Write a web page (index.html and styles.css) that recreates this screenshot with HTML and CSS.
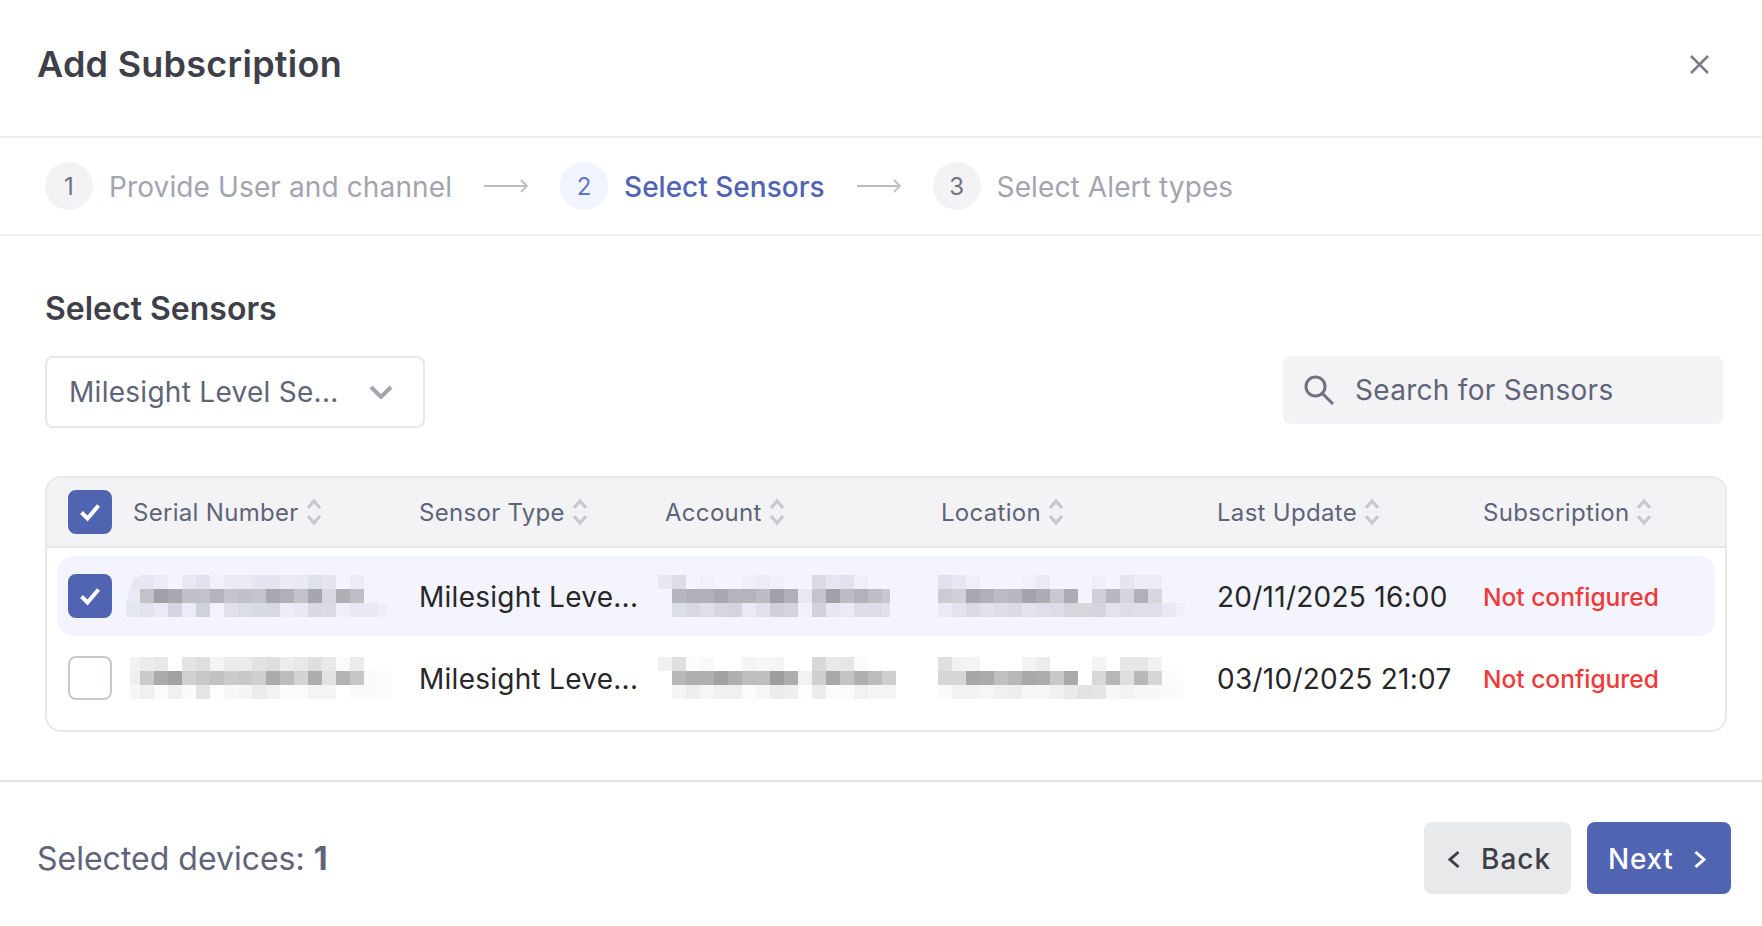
FILE: index.html
```html
<!DOCTYPE html>
<html lang="en">
<head>
<meta charset="utf-8">
<title>Add Subscription</title>
<link rel="stylesheet" href="styles.css">
</head>
<body>
<svg class="defs" width="0" height="0" aria-hidden="true">
  <symbol id="sort" viewBox="0 0 16 28"><path d="M2 10l6-7 6 7M2 18l6 7 6-7"/></symbol>
  <symbol id="check" viewBox="0 0 24 24"><path d="M3.500 12.500l6 6L20.500 5.500"/></symbol>
  <symbol id="arrow" viewBox="0 0 44 14"><path d="M0 7h43M37 1l6 6-6 6"/></symbol>
</svg>
<main class="modal">
  <header class="modal-head">
    <h1 class="modal-title">Add Subscription</h1>
    <svg class="close-icon" viewBox="0 0 19 19"><path d="M1 1l17 17M18 1L1 18"/></svg>
  </header>
  <nav class="stepper">
    <div class="step"><span class="step-num">1</span><span class="step-label">Provide User and channel</span></div>
    <svg class="step-arrow"><use href="#arrow"/></svg>
    <div class="step step-active"><span class="step-num">2</span><span class="step-label">Select Sensors</span></div>
    <svg class="step-arrow"><use href="#arrow"/></svg>
    <div class="step"><span class="step-num">3</span><span class="step-label">Select Alert types</span></div>
  </nav>
  <section class="content">
    <h2 class="section-title">Select Sensors</h2>
    <div class="toolbar">
      <div class="select"><span>Milesight Level Se...</span>
        <svg class="select-chevron" viewBox="0 0 24 14"><path d="M2 2l10 10L22 2"/></svg>
      </div>
      <div class="search">
        <svg class="search-icon" viewBox="0 0 30 30"><circle cx="11.500" cy="11.500" r="9.500"/><path d="M18.500 18.500L29 29"/></svg>
        <span>Search for Sensors</span>
      </div>
    </div>
    <div class="table">
      <div class="grid table-head">
        <span class="checkbox checked"><svg><use href="#check"/></svg></span>
        <span class="th">Serial Number<svg class="sort"><use href="#sort"/></svg></span>
        <span class="th">Sensor Type<svg class="sort"><use href="#sort"/></svg></span>
        <span class="th">Account<svg class="sort"><use href="#sort"/></svg></span>
        <span class="th">Location<svg class="sort"><use href="#sort"/></svg></span>
        <span class="th">Last Update<svg class="sort"><use href="#sort"/></svg></span>
        <span class="th">Subscription<svg class="sort"><use href="#sort"/></svg></span>
      </div>
      <div class="table-body">
        <div class="grid row row-selected">
          <span class="checkbox checked"><svg><use href="#check"/></svg></span>
          <svg class="px px-serial" width="266" height="42">
            <polygon points="8,2 14,2 14,14 4,14" fill="#e6e7f2"/>
            <rect x="14" y="0" fill="#e6e7f2"/><rect x="28" y="0" fill="#ebecf6"/><rect x="56" y="0" fill="#e7e8f3"/><rect x="70" y="0" fill="#e1e2ed"/><rect x="84" y="0" fill="#f0f1fa"/><rect x="98" y="0" fill="#eaebf5"/><rect x="112" y="0" fill="#eaebf5"/><rect x="126" y="0" fill="#e4e5f0"/><rect x="140" y="0" fill="#e4e5f0"/><rect x="154" y="0" fill="#eaebf5"/><rect x="168" y="0" fill="#e8e9f3"/><rect x="182" y="0" fill="#e0e2e9"/><rect x="196" y="0" fill="#e4e5ef"/><rect x="224" y="0" fill="#ebecf6"/>
            <polygon points="4,14 14,14 14,28 0,28" fill="#e8e9f4"/><rect x="14" y="14" fill="#c2c2c9"/><rect x="28" y="14" fill="#a0a0a8"/><rect x="42" y="14" fill="#a8a8b0"/><rect x="56" y="14" fill="#c0c0c8"/><rect x="70" y="14" fill="#c2c2ca"/><rect x="84" y="14" fill="#b4b4bc"/><rect x="98" y="14" fill="#c4c4cc"/><rect x="112" y="14" fill="#c0c0c8"/><rect x="126" y="14" fill="#c4c4cc"/><rect x="140" y="14" fill="#a8a8b0"/><rect x="154" y="14" fill="#b0b0b8"/><rect x="168" y="14" fill="#c2c2ca"/><rect x="182" y="14" fill="#a6a6ae"/><rect x="196" y="14" fill="#d8d9df"/><rect x="210" y="14" fill="#aeaeb5"/><rect x="224" y="14" fill="#bebec6"/>
            <rect x="0" y="28" fill="#e4e6f0"/><rect x="14" y="28" fill="#e2e3ee"/><rect x="28" y="28" fill="#e9eaf5"/><rect x="42" y="28" fill="#d4d5e2"/><rect x="56" y="28" fill="#ebecf7"/><rect x="70" y="28" fill="#d0d2da"/><rect x="84" y="28" fill="#f2f3fc"/><rect x="98" y="28" fill="#e0e1ec"/><rect x="112" y="28" fill="#dcdee6"/><rect x="126" y="28" fill="#d8dae2"/><rect x="140" y="28" fill="#d6d8e4"/><rect x="154" y="28" fill="#ecedf7"/><rect x="168" y="28" fill="#e8e9f4"/><rect x="182" y="28" fill="#d8dae0"/><rect x="196" y="28" fill="#dadbe6"/><rect x="210" y="28" fill="#eeeff9"/><rect x="224" y="28" fill="#e8e9f4"/><rect x="238" y="28" fill="#e8e9f4"/><polygon points="252,28 263,28 259,42 252,42" fill="#eeeff8"/>
          </svg>
          <span class="td">Milesight Leve...</span>
          <svg class="px px-account px-trim" width="238" height="42">
            <rect x="0" y="0" fill="#e6e7f3"/><rect x="14" y="0" fill="#dcdde6"/><rect x="42" y="0" fill="#f0f1fa"/><rect x="84" y="0" fill="#eeeff8"/><rect x="98" y="0" fill="#ebecf5"/><rect x="112" y="0" fill="#eff0f9"/><rect x="154" y="0" fill="#d9dae2"/><rect x="168" y="0" fill="#e5e6f1"/><rect x="182" y="0" fill="#e1e2ed"/><rect x="196" y="0" fill="#eeeff9"/>
            <rect x="14" y="14" fill="#b6b6be"/><rect x="28" y="14" fill="#b0b0b8"/><rect x="42" y="14" fill="#b0b0b8"/><rect x="56" y="14" fill="#a8a8b0"/><rect x="70" y="14" fill="#b4b4bc"/><rect x="84" y="14" fill="#b4b4bc"/><rect x="98" y="14" fill="#bcbcc4"/><rect x="112" y="14" fill="#a0a0a8"/><rect x="126" y="14" fill="#b0b0b8"/><rect x="140" y="14" fill="#e7e8f3"/><rect x="154" y="14" fill="#c4c4cc"/><rect x="168" y="14" fill="#a0a0a8"/><rect x="182" y="14" fill="#bcbcc4"/><rect x="196" y="14" fill="#b2b2ba"/><rect x="210" y="14" fill="#bebec6"/><rect x="224" y="14" fill="#c8c8d0"/>
            <rect x="14" y="28" fill="#dddfe6"/><rect x="28" y="28" fill="#d8d9e0"/><rect x="42" y="28" fill="#dfe0e8"/><rect x="56" y="28" fill="#d5d6de"/><rect x="70" y="28" fill="#d3d4e0"/><rect x="84" y="28" fill="#e9eaf5"/><rect x="98" y="28" fill="#e0e1ec"/><rect x="112" y="28" fill="#cfd0d8"/><rect x="126" y="28" fill="#d4d5dc"/><rect x="140" y="28" fill="#f0f1fa"/><rect x="154" y="28" fill="#d2d3da"/><rect x="168" y="28" fill="#e6e7f3"/><rect x="182" y="28" fill="#e9eaf5"/><rect x="196" y="28" fill="#dcdde6"/><rect x="210" y="28" fill="#dcdde8"/><rect x="224" y="28" fill="#e0e1ec"/>
          </svg>
          <svg class="px px-location" width="252" height="42">
            <rect x="0" y="0" fill="#e0e1ec"/><rect x="14" y="0" fill="#e6e7f2"/><rect x="28" y="0" fill="#eeeff9"/><rect x="84" y="0" fill="#f0f1fa"/><rect x="98" y="0" fill="#e9eaf4"/><rect x="154" y="0" fill="#eeeff8"/><rect x="182" y="0" fill="#e4e5f0"/><rect x="196" y="0" fill="#ebecf6"/><rect x="210" y="0" fill="#ebecf6"/>
            <rect x="0" y="14" fill="#ccccd4"/><rect x="14" y="14" fill="#d0d1d8"/><rect x="28" y="14" fill="#a8a8b0"/><rect x="42" y="14" fill="#b0b0b8"/><rect x="56" y="14" fill="#bcbcc4"/><rect x="70" y="14" fill="#b8b8c0"/><rect x="84" y="14" fill="#a4a4ac"/><rect x="98" y="14" fill="#acacb4"/><rect x="112" y="14" fill="#c8c9d0"/><rect x="126" y="14" fill="#acacb4"/><rect x="154" y="14" fill="#d0d1d8"/><rect x="168" y="14" fill="#b8b8c0"/><rect x="182" y="14" fill="#d4d5df"/><rect x="196" y="14" fill="#b0b0b8"/><rect x="210" y="14" fill="#d6d7dc"/>
            <rect x="0" y="28" fill="#e9eaf5"/><rect x="14" y="28" fill="#e2e3ee"/><rect x="28" y="28" fill="#dadbe2"/><rect x="42" y="28" fill="#e0e1ea"/><rect x="56" y="28" fill="#dcdde8"/><rect x="70" y="28" fill="#dadbe3"/><rect x="84" y="28" fill="#e2e3ee"/><rect x="98" y="28" fill="#dedfea"/><rect x="112" y="28" fill="#dcdde8"/><rect x="126" y="28" fill="#d6d7dd"/><rect x="140" y="28" fill="#d6d7dd"/><rect x="154" y="28" fill="#d4d5dc"/><rect x="168" y="28" fill="#e2e3ee"/><rect x="182" y="28" fill="#dcdde8"/><rect x="196" y="28" fill="#dedfe9"/><rect x="210" y="28" fill="#dedfe9"/><rect x="224" y="28" fill="#e8e9f4"/><polygon points="238,28 248,28 245,42 238,42" fill="#eeeff8"/>
          </svg>
          <span class="td">20/11/2025 16:00</span>
          <span class="status">Not configured</span>
        </div>
        <div class="grid row">
          <span class="checkbox"></span>
          <svg class="px px-serial px-inset" width="266" height="42">
            <rect x="0" y="0" fill="#f2f2f2"/><rect x="14" y="0" fill="#ececec"/><rect x="28" y="0" fill="#e8e8e8"/><rect x="56" y="0" fill="#e4e4e4"/><rect x="70" y="0" fill="#dedede"/><rect x="84" y="0" fill="#f4f4f4"/><rect x="98" y="0" fill="#ebebeb"/><rect x="112" y="0" fill="#ebebeb"/><rect x="126" y="0" fill="#e2e2e2"/><rect x="140" y="0" fill="#dedede"/><rect x="154" y="0" fill="#ececec"/><rect x="168" y="0" fill="#e8e8e8"/><rect x="182" y="0" fill="#dedede"/><rect x="196" y="0" fill="#e8e8e8"/><rect x="210" y="0" fill="#fafafa"/><rect x="224" y="0" fill="#ebebeb"/>
            <rect x="0" y="14" fill="#efefef"/><rect x="14" y="14" fill="#cbcbcb"/><rect x="28" y="14" fill="#ababab"/><rect x="42" y="14" fill="#a2a2a2"/><rect x="56" y="14" fill="#d0d0d0"/><rect x="70" y="14" fill="#c8c8c8"/><rect x="84" y="14" fill="#c2c2c2"/><rect x="98" y="14" fill="#cbcbcb"/><rect x="112" y="14" fill="#c8c8c8"/><rect x="126" y="14" fill="#cfcfcf"/><rect x="140" y="14" fill="#ababab"/><rect x="154" y="14" fill="#bcbcbc"/><rect x="168" y="14" fill="#d4d4d4"/><rect x="182" y="14" fill="#adadad"/><rect x="196" y="14" fill="#e2e2e2"/><rect x="210" y="14" fill="#b3b3b3"/><rect x="224" y="14" fill="#c6c6c6"/><rect x="238" y="14" fill="#fafafa"/><rect x="252" y="14" fill="#fbfbfb"/>
            <rect x="0" y="28" fill="#f6f6f6"/><rect x="14" y="28" fill="#f0f0f0"/><rect x="28" y="28" fill="#fbfbfb"/><rect x="42" y="28" fill="#f0f0f0"/><rect x="56" y="28" fill="#fafafa"/><rect x="70" y="28" fill="#e4e4e4"/><rect x="84" y="28" fill="#fefefe"/><rect x="98" y="28" fill="#f7f7f7"/><rect x="112" y="28" fill="#f5f5f5"/><rect x="126" y="28" fill="#ebebeb"/><rect x="140" y="28" fill="#f2f2f2"/><rect x="154" y="28" fill="#fcfcfc"/><rect x="168" y="28" fill="#fbfbfb"/><rect x="182" y="28" fill="#f4f4f4"/><rect x="196" y="28" fill="#f4f4f4"/><rect x="224" y="28" fill="#fafafa"/><rect x="238" y="28" fill="#fafafa"/><rect x="252" y="28" fill="#fbfbfb"/>
          </svg>
          <span class="td">Milesight Leve...</span>
          <svg class="px px-account" width="238" height="42">
            <rect x="0" y="0" fill="#f0f0f0"/><rect x="14" y="0" fill="#dfdfdf"/><rect x="28" y="0" fill="#fcfcfc"/><rect x="42" y="0" fill="#f8f8f8"/><rect x="84" y="0" fill="#f4f4f4"/><rect x="98" y="0" fill="#f7f7f7"/><rect x="112" y="0" fill="#f4f4f4"/><rect x="154" y="0" fill="#d8d8d8"/><rect x="168" y="0" fill="#e8e8e8"/><rect x="182" y="0" fill="#e6e6e6"/><rect x="196" y="0" fill="#fafafa"/>
            <rect x="14" y="14" fill="#b8b8b8"/><rect x="28" y="14" fill="#b0b0b0"/><rect x="42" y="14" fill="#b0b0b0"/><rect x="56" y="14" fill="#a2a2a2"/><rect x="70" y="14" fill="#b0b0b0"/><rect x="84" y="14" fill="#bebebe"/><rect x="98" y="14" fill="#bebebe"/><rect x="112" y="14" fill="#9e9c9c"/><rect x="126" y="14" fill="#aeaeae"/><rect x="140" y="14" fill="#f2f2f2"/><rect x="154" y="14" fill="#cfcfcf"/><rect x="168" y="14" fill="#a8a8a8"/><rect x="182" y="14" fill="#c4c4c4"/><rect x="196" y="14" fill="#b0b0b0"/><rect x="210" y="14" fill="#bcbcbc"/><rect x="224" y="14" fill="#cecece"/>
            <rect x="14" y="28" fill="#f5f5f5"/><rect x="28" y="28" fill="#eeeeee"/><rect x="42" y="28" fill="#f6f6f6"/><rect x="56" y="28" fill="#f0f0f0"/><rect x="70" y="28" fill="#f0f0f0"/><rect x="84" y="28" fill="#fbfbfb"/><rect x="98" y="28" fill="#f6f6f6"/><rect x="112" y="28" fill="#ececec"/><rect x="126" y="28" fill="#efefef"/><rect x="140" y="28" fill="#fdfdfd"/><rect x="154" y="28" fill="#ececec"/><rect x="168" y="28" fill="#fbfbfb"/><rect x="182" y="28" fill="#fbfbfb"/><rect x="196" y="28" fill="#f2f2f2"/><rect x="210" y="28" fill="#f5f5f5"/><rect x="224" y="28" fill="#f5f5f5"/>
          </svg>
          <svg class="px px-location px-trim" width="252" height="42">
            <rect x="0" y="0" fill="#e0e0e0"/><rect x="14" y="0" fill="#f2f2f2"/><rect x="28" y="0" fill="#f4f4f4"/><rect x="84" y="0" fill="#f3f3f3"/><rect x="98" y="0" fill="#ececec"/><rect x="154" y="0" fill="#f4f4f4"/><rect x="182" y="0" fill="#e6e6e6"/><rect x="196" y="0" fill="#e6e6e6"/><rect x="210" y="0" fill="#f2f2f2"/>
            <rect x="0" y="14" fill="#d6d6d6"/><rect x="14" y="14" fill="#d6d6d6"/><rect x="28" y="14" fill="#a8a6a6"/><rect x="42" y="14" fill="#ababab"/><rect x="56" y="14" fill="#c0c0c0"/><rect x="70" y="14" fill="#b8b8b8"/><rect x="84" y="14" fill="#a8a8a8"/><rect x="98" y="14" fill="#acacac"/><rect x="112" y="14" fill="#c8c8c8"/><rect x="126" y="14" fill="#aaaaaa"/><rect x="154" y="14" fill="#d8d8d8"/><rect x="168" y="14" fill="#b8b8b8"/><rect x="182" y="14" fill="#dedede"/><rect x="196" y="14" fill="#b8b8b8"/><rect x="210" y="14" fill="#d6d6d6"/><rect x="224" y="14" fill="#fcfcfc"/><rect x="238" y="14" fill="#fdfdfd"/>
            <rect x="0" y="28" fill="#f9f9f9"/><rect x="14" y="28" fill="#f2f2f2"/><rect x="28" y="28" fill="#f2f2f2"/><rect x="42" y="28" fill="#f6f6f6"/><rect x="56" y="28" fill="#f0f0f0"/><rect x="70" y="28" fill="#eeeeee"/><rect x="84" y="28" fill="#f6f6f6"/><rect x="98" y="28" fill="#f6f6f6"/><rect x="112" y="28" fill="#f0f0f0"/><rect x="126" y="28" fill="#eaeaea"/><rect x="140" y="28" fill="#e2e2e2"/><rect x="154" y="28" fill="#e6e6e6"/><rect x="168" y="28" fill="#f8f8f8"/><rect x="182" y="28" fill="#f2f2f2"/><rect x="196" y="28" fill="#f8f8f8"/><rect x="210" y="28" fill="#f8f8f8"/><rect x="224" y="28" fill="#fafafa"/><rect x="238" y="28" fill="#fcfcfc"/>
          </svg>
          <span class="td">03/10/2025 21:07</span>
          <span class="status">Not configured</span>
        </div>
      </div>
    </div>
  </section>
  <footer class="modal-foot">
    <div class="selected-count">Selected devices: <strong>1</strong></div>
    <div class="actions">
      <button class="btn btn-back" type="button"><svg class="btn-chevron" viewBox="0 0 12 19"><path d="M10.500 2L2 9.500l8.500 7.500"/></svg>Back</button>
      <button class="btn btn-next" type="button">Next<svg class="btn-chevron" viewBox="0 0 12 19"><path d="M1.500 2L10 9.500 1.500 17"/></svg></button>
    </div>
  </footer>
</main>
</body>
</html>
```
FILE: styles.css
```css
* { box-sizing: border-box; }
html, body { margin: 0; padding: 0; background: #fff; }
body { font-family: Inter, "Liberation Sans", sans-serif; color: #27272a; }
.defs { position: absolute; }
svg { display: block; flex: none; }

.modal { display: flex; flex-direction: column; height: 926px; overflow: hidden; }

.modal-head { display: flex; align-items: center; justify-content: space-between; height: 138px; padding: 0 53px 8px 37px; border-bottom: 2px solid #f0f0f0; }
.modal-title { margin: 0; font-size: 36px; line-height: 44px; font-weight: 600; letter-spacing: .25px; color: #3f3f49; }
.close-icon { width: 19px; height: 19px; fill: none; stroke: #7b7b8a; stroke-width: 2.500; }

.stepper { display: flex; align-items: center; gap: 32px; height: 98px; padding: 0 0 0 45px; border-bottom: 2px solid #f0f0f0; }
.step { display: flex; align-items: center; gap: 16px; }
.step-num { display: flex; align-items: center; justify-content: center; width: 48px; height: 48px; border-radius: 50%; background: #f3f3f6; color: #71717f; font-size: 24px; }
.step-label { padding-top: 1px; font-size: 28px; line-height: 40px; letter-spacing: .12px; color: #a4a4b0; }
.step-active .step-num { background: #f1f3fd; color: #5f74c9; }
.step-active .step-label { color: #5064b2; font-weight: 500; letter-spacing: 0; }
.step-arrow { width: 44px; height: 14px; fill: none; stroke: #bcbcc6; stroke-width: 1.800; }

.content { flex: 1; padding: 55px 35px 0 45px; }
.section-title { margin: 0; font-size: 32px; line-height: 36px; font-weight: 600; color: #3f3f49; }
.toolbar { display: flex; align-items: flex-start; justify-content: space-between; margin-top: 29px; }
.select { display: flex; align-items: center; justify-content: space-between; width: 380px; height: 72px; padding: 0 30px 0 22px; border: 2px solid #e8e8eb; border-radius: 8px; font-size: 28px; letter-spacing: .28px; color: #5f6478; }
.select-chevron { width: 24px; height: 14px; fill: none; stroke: #a4a4b0; stroke-width: 4; }
.search { display: flex; align-items: center; gap: 21px; width: 440px; height: 68px; margin-right: 4px; padding-left: 21px; background: #f3f3f6; border-radius: 8px; font-size: 28px; letter-spacing: .29px; color: #5f6478; }
.search-icon { width: 30px; height: 30px; fill: none; stroke: #71717f; stroke-width: 3; }

.table { margin-top: 48px; height: 256px; border: 2px solid #e8e8eb; border-radius: 16px; overflow: hidden; }
.grid { display: grid; grid-template-columns: 65px 286px 246px 276px 276px 266px 1fr; align-items: center; }
.table-head { height: 70px; padding-left: 21px; background: #f3f3f6; border-bottom: 2px solid #e8e8eb; }
.th { display: flex; align-items: center; gap: 7px; font-size: 24px; letter-spacing: .3px; color: #5f6478; }
.sort { width: 16px; height: 28px; fill: none; stroke: #c8c8d2; stroke-width: 3.200; }

.checkbox { display: flex; align-items: center; justify-content: center; width: 44px; height: 44px; border: 2px solid #c8c8d2; border-radius: 8px; background: #fff; }
.checkbox.checked { background: #5064b2; border-color: #5064b2; }
.checkbox svg { width: 24px; height: 24px; fill: none; stroke: #fff; stroke-width: 4; }

.table-body { display: flex; flex-direction: column; gap: 2px; padding: 8px 10px 12px 10px; }
.row { height: 80px; padding-left: 11px; border-radius: 16px; }
.row-selected { background: #f3f4fd; }
.td { padding-top: 2px; font-size: 28px; letter-spacing: .26px; color: #27272a; }
.status { padding-top: 2px; font-size: 24.500px; font-weight: 500; color: #ee3a3a; }
.px rect { width: 14px; height: 14px; }
.px-serial, .px-account { margin-left: -7px; }
.px-location { margin-left: -3px; }
.px-inset { clip-path: inset(0 0 0 4px); }
.px-trim { clip-path: inset(0 6px 0 0); }

.modal-foot { display: flex; align-items: flex-start; justify-content: space-between; height: 146px; padding: 40px 31px 0 37px; border-top: 2px solid #e3e3e3; }
.selected-count { padding-top: 1px; font-size: 32px; line-height: 72px; color: #5f6478; }
.selected-count strong { font-weight: 700; }
.actions { display: flex; gap: 16px; }
.btn { display: flex; align-items: center; gap: 21px; height: 72px; border: 0; border-radius: 8px; font: 500 28px/1 Inter, "Liberation Sans", sans-serif; letter-spacing: .7px; }
.btn-chevron { width: 12px; height: 19px; fill: none; stroke: currentColor; stroke-width: 3; }
.btn-back { width: 147px; padding: 2px 0 0 24px; background: #e8e9ea; color: #3f3f49; letter-spacing: 1px; }
.btn-next { width: 144px; padding: 2px 0 0 21px; background: #5064b2; color: #fff; }
```
